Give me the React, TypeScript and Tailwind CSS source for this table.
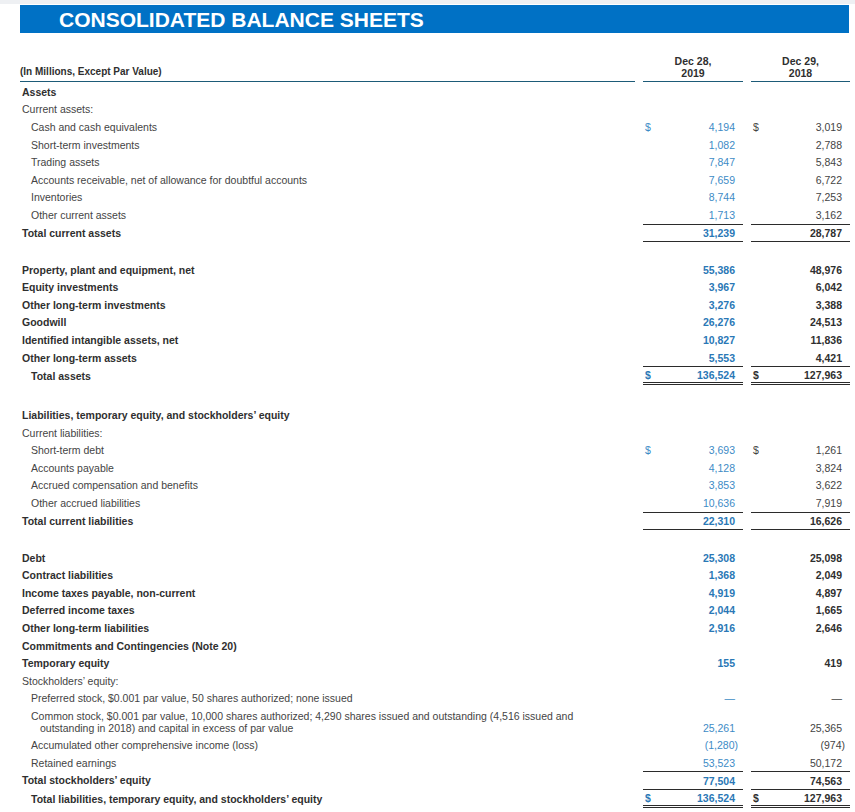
import React from 'react';

type Row = {
  label?: string;
  level?: number;
  bold?: boolean;
  a?: string;
  b?: string;
  dollar?: boolean;
  line?: 'sub' | 'top' | 'grand';
  gap?: 'sm' | 'lg';
  wrap?: string;
};

const rows: Row[] = [
  { label: 'Assets', bold: true },
  { label: 'Current assets:' },
  { label: 'Cash and cash equivalents', level: 1, a: '4,194', b: '3,019', dollar: true },
  { label: 'Short-term investments', level: 1, a: '1,082', b: '2,788' },
  { label: 'Trading assets', level: 1, a: '7,847', b: '5,843' },
  { label: 'Accounts receivable, net of allowance for doubtful accounts', level: 1, a: '7,659', b: '6,722' },
  { label: 'Inventories', level: 1, a: '8,744', b: '7,253' },
  { label: 'Other current assets', level: 1, a: '1,713', b: '3,162' },
  { label: 'Total current assets', bold: true, a: '31,239', b: '28,787', line: 'sub' },
  { gap: 'sm' },
  { label: 'Property, plant and equipment, net', bold: true, a: '55,386', b: '48,976' },
  { label: 'Equity investments', bold: true, a: '3,967', b: '6,042' },
  { label: 'Other long-term investments', bold: true, a: '3,276', b: '3,388' },
  { label: 'Goodwill', bold: true, a: '26,276', b: '24,513' },
  { label: 'Identified intangible assets, net', bold: true, a: '10,827', b: '11,836' },
  { label: 'Other long-term assets', bold: true, a: '5,553', b: '4,421' },
  { label: 'Total assets', level: 1, bold: true, a: '136,524', b: '127,963', dollar: true, line: 'grand' },
  { gap: 'lg' },
  { label: 'Liabilities, temporary equity, and stockholders\u2019 equity', bold: true },
  { label: 'Current liabilities:' },
  { label: 'Short-term debt', level: 1, a: '3,693', b: '1,261', dollar: true },
  { label: 'Accounts payable', level: 1, a: '4,128', b: '3,824' },
  { label: 'Accrued compensation and benefits', level: 1, a: '3,853', b: '3,622' },
  { label: 'Other accrued liabilities', level: 1, a: '10,636', b: '7,919' },
  { label: 'Total current liabilities', bold: true, a: '22,310', b: '16,626', line: 'sub' },
  { gap: 'sm' },
  { label: 'Debt', bold: true, a: '25,308', b: '25,098' },
  { label: 'Contract liabilities', bold: true, a: '1,368', b: '2,049' },
  { label: 'Income taxes payable, non-current', bold: true, a: '4,919', b: '4,897' },
  { label: 'Deferred income taxes', bold: true, a: '2,044', b: '1,665' },
  { label: 'Other long-term liabilities', bold: true, a: '2,916', b: '2,646' },
  { label: 'Commitments and Contingencies (Note 20)', bold: true },
  { label: 'Temporary equity', bold: true, a: '155', b: '419' },
  { label: 'Stockholders\u2019 equity:' },
  { label: 'Preferred stock, $0.001 par value, 50 shares authorized; none issued', level: 1, a: '\u2014', b: '\u2014' },
  {
    label: 'Common stock, $0.001 par value, 10,000 shares authorized; 4,290 shares issued and outstanding (4,516 issued and',
    wrap: 'outstanding in 2018) and capital in excess of par value',
    level: 1,
    a: '25,261',
    b: '25,365',
  },
  { label: 'Accumulated other comprehensive income (loss)', level: 1, a: '(1,280)', b: '(974)' },
  { label: 'Retained earnings', level: 1, a: '53,523', b: '50,172' },
  { label: 'Total stockholders\u2019 equity', bold: true, a: '77,504', b: '74,563', line: 'top' },
  { label: 'Total liabilities, temporary equity, and stockholders\u2019 equity', level: 1, bold: true, a: '136,524', b: '127,963', dollar: true, line: 'grand' },
];

function lineClass(line?: Row['line']) {
  if (line === 'sub') return 'border-t border-b border-[#2b2b2b]';
  if (line === 'top') return 'border-t border-[#2b2b2b]';
  if (line === 'grand') return 'border-t border-b-[3px] border-double border-[#2b2b2b]';
  return '';
}

function ValueCell({ value, dollar, bold, line, blue, tall }: {
  value?: string;
  dollar?: boolean;
  bold?: boolean;
  line?: Row['line'];
  blue: boolean;
  tall: boolean;
}) {
  const color = blue
    ? bold ? 'text-[#2a78b6]' : 'text-[#3d8bc6]'
    : bold ? 'text-[#2f2f2f]' : 'text-[#444444]';
  const neg = value?.startsWith('(');
  const align = tall ? 'items-end pb-[2px]' : 'items-center';
  return (
    <div className={`flex justify-between ${align} ${lineClass(line)} ${color} ${bold ? 'font-bold' : ''}`}>
      <span className="pl-[2px]">{dollar ? '$' : ''}</span>
      <span className={neg ? 'pr-[5px]' : 'pr-[8px]'}>{value}</span>
    </div>
  );
}

export default function App() {
  return (
    <div className="w-[855px] min-h-[812px] bg-white text-[10.5px] leading-[12px] font-['Liberation_Sans',Arial,sans-serif]">
      <div className="h-[4px] bg-[#eef0f3]" />
      <div className="ml-[20px] mr-[6px] mt-[1px] h-[28px] bg-[#0071c5] flex items-center pl-[39px]">
        <h1 className="text-white font-bold text-[21px] leading-none">CONSOLIDATED BALANCE SHEETS</h1>
      </div>

      <div className="ml-[20px] mt-[22px] grid grid-cols-[615px_100px_99px] gap-x-[8px]">
        <div className="flex items-end pb-[3px] border-b border-[#1d5b78] font-bold text-[#2f2f2f] text-[10px]">
          (In Millions, Except Par Value)
        </div>
        <div className="pb-[2px] border-b border-[#1d5b78] text-center font-bold text-[#2f2f2f] text-[10.5px]">
          Dec 28,<br />2019
        </div>
        <div className="pb-[2px] border-b border-[#1d5b78] text-center font-bold text-[#2f2f2f] text-[10.5px]">
          Dec 29,<br />2018
        </div>
      </div>

      <div className="ml-[20px] mt-[1px] grid grid-cols-[615px_100px_99px] gap-x-[8px]">
        {rows.map((r, i) => {
          if (r.gap) {
            return <div key={i} className={`col-span-3 ${r.gap === 'lg' ? 'h-[21px]' : 'h-[19px]'}`} />;
          }
          const tall = !!r.wrap;
          const h = tall
            ? 'h-[29px]'
            : r.line === 'grand'
              ? 'h-[19px]'
              : r.line === 'sub'
                ? 'h-[18px]'
                : 'h-[17.6px]';
          const pl = r.level === 1 ? 'pl-[11px]' : 'pl-[2px]';
          return (
            <React.Fragment key={i}>
              <div className={`${h} ${pl} flex flex-col justify-center ${r.bold ? 'font-bold text-[#2f2f2f]' : 'text-[#444444]'}`}>
                <span className="whitespace-nowrap">{r.label}</span>
                {r.wrap && <span className="pl-[9px] whitespace-nowrap">{r.wrap}</span>}
              </div>
              <div className={h + ' grid'}>
                <ValueCell value={r.a} dollar={r.dollar} bold={r.bold} line={r.line} blue tall={tall} />
              </div>
              <div className={h + ' grid'}>
                <ValueCell value={r.b} dollar={r.dollar} bold={r.bold} line={r.line} blue={false} tall={tall} />
              </div>
            </React.Fragment>
          );
        })}
      </div>
    </div>
  );
}
